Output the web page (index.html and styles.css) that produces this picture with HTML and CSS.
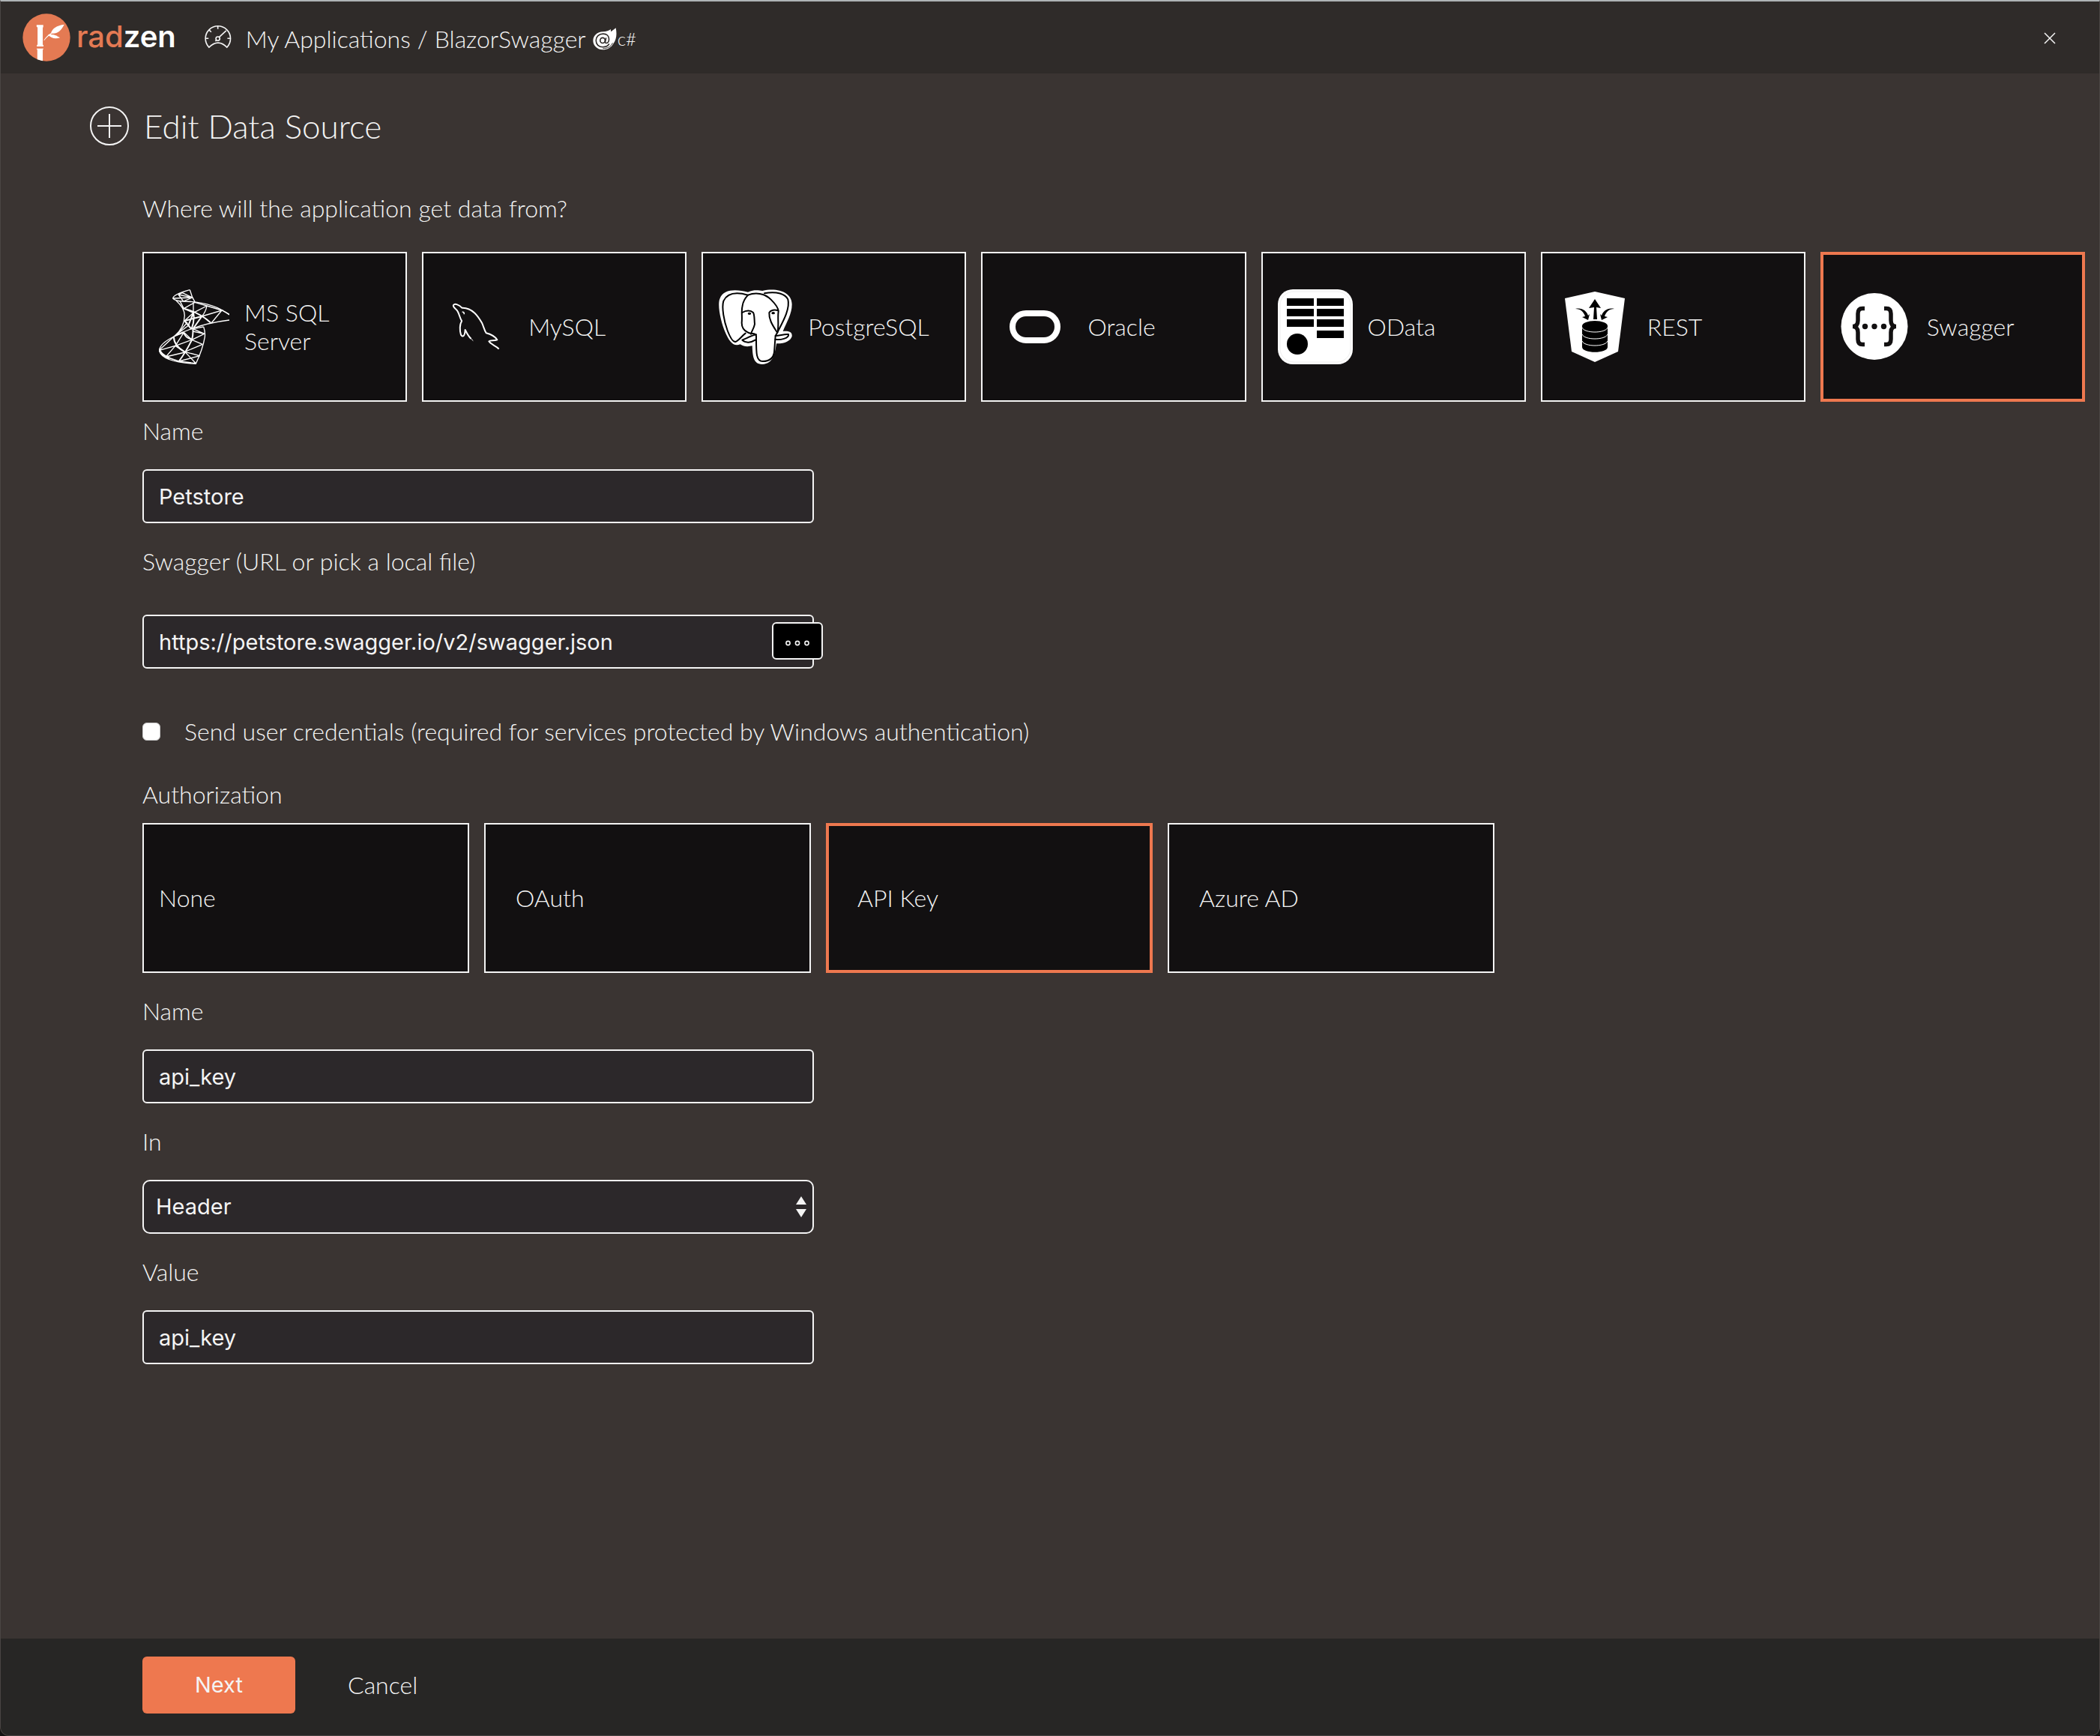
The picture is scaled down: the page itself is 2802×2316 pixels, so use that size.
FILE: index.html
```html
<!DOCTYPE html>
<html lang="en">
<head>
<meta charset="utf-8">
<title>Radzen - Edit Data Source</title>
<link rel="stylesheet" href="styles.css">
</head>
<body>
<div class="window">
  <header class="topbar">
    <a class="brand" href="#">
      <svg class="brand-mark" viewBox="60 54 194 192" aria-hidden="true">
        <defs><clipPath id="disc"><circle cx="157" cy="150" r="96"/></clipPath></defs>
        <circle cx="157" cy="150" r="96" fill="#e47a53"/>
        <g fill="#fff" clip-path="url(#disc)">
          <path d="M117 99h27v8l-2 4v68l3 3v4h-27v-4l3-4v-68l-4-4z"/>
          <path d="M117 195h28l-3 6v50h-22v-50z"/>
          <path d="M175 134c4-20 24-32 54-36-14 26-28 39-54 36z"/>
          <path d="M163 139c22-4 34 3 49 12-18 6-35 4-49-12z"/>
          <path d="M146 161c10-14 18-22 30-29l3 2c-12 8-20 15-31 28z"/>
        </g>
      </svg>
      <span class="brand-name">rad<b>zen</b></span>
    </a>
    <nav class="crumbs" aria-label="Breadcrumb">
      <svg class="gauge" viewBox="790 100 110 94" fill="none" stroke="#f4f4f4" stroke-width="5" aria-hidden="true">
        <path d="M808 190a51 51 0 1 1 73 0q-36-36-73 0z"/>
        <circle cx="844" cy="155" r="8"/>
        <path d="M850 148l28-26M844 104v12M809 120l8 8M794 154h12M883 154h12M838 160l-4 5"/>
      </svg>
      <a href="#">My Applications</a>
      <span>/</span>
      <a href="#">BlazorSwagger</a>
      <svg class="blazor" viewBox="102 50 96 92" aria-hidden="true">
        <path d="M142 66c14 0 26-4 32-10l1 10 20-15c5 25 3 46-10 64-9 16-25 25-43 25-22 0-40-16-40-37s18-37 40-37z" fill="#fff"/>
        <g fill="none" stroke="#2f2b29">
          <path d="M168 116c-5 8-14 13-26 13-17 0-28-11-28-27s12-27 29-27c15 0 24 9 24 22 0 11-6 16-11 16-4 0-5-3-4-7l3-15" stroke-width="5"/>
          <ellipse cx="141" cy="102" rx="10" ry="11" stroke-width="5"/>
          <path d="M182 112c-7 16-22 23-40 23" stroke-width="3"/>
        </g>
      </svg>
      <span class="lang">c#</span>
    </nav>
    <button class="close" type="button" aria-label="Close">
      <svg viewBox="0 0 16 16" stroke="#f4f4f4" stroke-width="1.500" aria-hidden="true"><path d="M1 1l14 14M15 1L1 15"/></svg>
    </button>
  </header>

  <main class="page">
    <div class="heading">
      <svg class="plus" viewBox="0 0 52 52" fill="none" stroke="#f4f4f4" stroke-width="2" aria-hidden="true">
        <circle cx="26" cy="26" r="25"/><path d="M26 10v32M10 26h32"/>
      </svg>
      <h1>Edit Data Source</h1>
    </div>

    <form class="form" id="source">
      <p class="label" id="kind">Where will the application get data from?</p>
      <div class="cards sources" role="group" aria-labelledby="kind">
        <button type="button" class="card">
          <svg class="logo logo-mssql" viewBox="96 198 282 300" fill="none" stroke="#fff" stroke-width="4" aria-hidden="true">
            <path d="M220 200q-66 18-68 34 8 10 36 12 120 0 190 54M220 200l10 30 10 18M174 219l56 12M174 219l20 27M190 212l-16 7M190 212l40 19-36 15M154 234l76-3"/>
            <path d="M378 321q-130 16-222 66-60 30-58 58 12 44 146 51 28-60 36-108 2-20-5-40"/>
            <path d="M165 243q34 30 34 60-2 50-40 82M180 245l16 30M196 275l44-25M196 275l38 17M234 250v42M240 250l48 14M234 292l54-28M234 292l-35 32M288 264q-4 24-20 42M268 306l80-24-42 51M288 264l60 18M348 282l30 16"/>
            <path d="M196 275q60 14 108 57M199 324l69-18M199 324l28 34M234 292l-20 50M268 306l-34 48M234 292q6 30-7 64" stroke-width="6"/>
            <path d="M156 387l62-47M166 382l44-52M158 385l34-16"/>
            <path d="M156 387q-2 34 44 62M196 370q4 22 36 30M232 356q2 24-4 44-24 50-52 86" stroke-width="6"/>
            <path d="M232 356l46 20-50 24-30-28M275 348l-43 8M228 400l43 18M232 366l46 10M156 387l40-16M196 370l-34 54M162 424l66-24M98 442l64-18-38 44M156 387l-54 50M124 468l76-18M200 448l71-30M200 448l60 16M200 448l44 46M176 486l84-22M124 468l52 18M162 424l38 26M176 486l68 8"/>
            <path d="M98 436q0 20 40 38" stroke-width="8"/>
          </svg>
          <span>MS SQL<br>Server</span>
        </button>
        <button type="button" class="card">
          <svg class="logo" viewBox="108 198 300 300" fill="none" stroke="#fff" stroke-width="6" stroke-linejoin="round" aria-hidden="true">
            <path d="M202 326c-10-14-11-36-22-46-8-9-15-12-12-19 6-8 23-1 34 11 42-2 66 36 80 60 7 16 10 30 17 41 16 4 34 12 44 27-12 5-28 1-33 6 8 14 28 16 40 31"/>
            <path d="M202 324c-10 14-9 40-4 56 8 12 16 4 17-20 8 16 14 28 24 36"/>
            <path d="M239 396l8 8" stroke-width="3"/>
            <path d="M203 289c6-1 8 2 8 9" stroke-width="5"/>
          </svg>
          <span>MySQL</span>
        </button>
        <button type="button" class="card">
          <svg class="logo" viewBox="84 198 300 300" aria-hidden="true">
            <path d="M204 209c30-12 44-5 58-5 60-14 118 6 118 54 0 40-22 72-36 108 22-2 38 2 36 20-5 18-30 30-62 29-6 34-10 82-57 83-38 0-38-38-40-74-16 4-34 4-48-6-30 12-46-18-58-44-20-44-34-112-24-138 14-42 70-38 113-27z" fill="#fff"/>
            <g fill="none" stroke="#000" stroke-width="6" stroke-linejoin="round" stroke-linecap="round">
              <path d="M204 221c-50-14-84-6-98 24-8 26 2 80 16 118 10 26 22 46 32 45 12-4 26-24 40-34"/>
              <path d="M204 221c30-12 66-8 92 18 18 18 29 34 30 46-4 30 2 50-3 84l-9 15-5 66c-4 26-20 36-46 36-28 0-26-38-26-102-4-14-20-4-34-14-16-8-24-20-24-38 3-28-3-50 3-68 2-16 10-30 22-43z"/>
              <path d="M270 214c50-10 84 4 94 24 10 40-24 96-41 130"/>
              <path d="M181 291c16-10 34-10 44 0 6 10 4 30 6 46-3 18-12 26-15 40"/>
              <path d="M325 283c-14-4-28-2-36 8-2 30 16 54 32 80"/>
              <path d="M237 379c-20 4-40 16-56 22 14 14 36 10 52 0"/>
              <path d="M314 384c18 0 34-8 52-6 4 16-34 24-53 20"/>
              <ellipse cx="210" cy="295" rx="4" ry="2"/><ellipse cx="305" cy="293" rx="4" ry="2"/>
            </g>
          </svg>
          <span>PostgreSQL</span>
        </button>
        <button type="button" class="card">
          <svg class="logo" viewBox="0 0 100 100" aria-hidden="true"><rect x="20" y="32" width="60" height="36" rx="18" fill="none" stroke="#fff" stroke-width="8"/></svg>
          <span>Oracle</span>
        </button>
        <button type="button" class="card">
          <svg class="logo" viewBox="0 0 100 100" aria-hidden="true">
            <rect width="100" height="100" rx="20" fill="#fff"/>
            <rect x="3" y="3" width="94" height="94" rx="18" fill="none" stroke="#eee"/>
            <path d="M12 12h36v10H12zM12 26h36v10H12zM12 40h36v10H12zM52 12h36v10H52zM52 26h36v10H52zM52 40h36v10H52zM52 55h36v10H52z"/>
            <circle cx="26" cy="73" r="14"/>
          </svg>
          <span>OData</span>
        </button>
        <button type="button" class="card">
          <svg class="logo" viewBox="0 0 100 100" aria-hidden="true">
            <path d="M50 3l40 9-9 71-31 14-31-14-9-71z" fill="#fff"/>
            <path d="M50 13l8 12-6-1 1 16h-5l1-16-7 1z"/>
            <path d="M24 26c9-2 15 3 17 9l2-2-2 8-8-4 4-1c-2-6-6-10-13-10zM76 26c-9-2-15 3-17 9l-2-2 2 8 8-4-4-1c2-6 6-10 13-10z"/>
            <path d="M33 49v28c0 9 34 9 34 0V49z"/><ellipse cx="50" cy="49" rx="17" ry="7"/>
            <path d="M33 51c3 8 31 8 34 0M33 60c3 8 31 8 34 0M33 69c3 8 31 8 34 0" fill="none" stroke="#fff" stroke-width="1"/>
          </svg>
          <span>REST</span>
        </button>
        <button type="button" class="card selected" aria-pressed="true">
          <svg class="logo" viewBox="0 0 100 100" aria-hidden="true">
            <circle cx="50" cy="49.500" r="44.500" fill="#fff"/>
            <path d="M37 25.500h-3q-6 0-6 7v9q0 8-7 8 7 0 7 8v9q0 7 6 7h3M63 25.500h3q6 0 6 7v9q0 8 7 8-7 0-7 8v9q0 7-6 7h-3" fill="none" stroke="#121011" stroke-width="5.500"/>
            <g fill="#121011"><circle cx="37.500" cy="49.500" r="3.700"/><circle cx="50" cy="49.500" r="3.700"/><circle cx="62.500" cy="49.500" r="3.700"/></g>
          </svg>
          <span>Swagger</span>
        </button>
      </div>

      <label class="label" for="name">Name</label>
      <input class="field" id="name" type="text" value="Petstore">

      <label class="label label-file" for="url">Swagger (URL or pick a local file)</label>
      <div class="file">
        <input class="field" id="url" type="text" value="https://petstore.swagger.io/v2/swagger.json">
        <button class="browse" type="button" aria-label="Browse">
          <svg viewBox="0 0 34 10" fill="none" stroke="#f4f4f4" stroke-width="1.600" aria-hidden="true"><circle cx="4.500" cy="5" r="2.600"/><circle cx="17" cy="5" r="2.600"/><circle cx="29.500" cy="5" r="2.600"/></svg>
        </button>
      </div>

      <label class="check"><input type="checkbox">Send user credentials (required for services protected by Windows authentication)</label>

      <p class="label" id="auth">Authorization</p>
      <div class="cards auths" role="group" aria-labelledby="auth">
        <button type="button" class="card">None</button>
        <button type="button" class="card inset">OAuth</button>
        <button type="button" class="card inset selected" aria-pressed="true">API Key</button>
        <button type="button" class="card inset">Azure AD</button>
      </div>

      <label class="label" for="key">Name</label>
      <input class="field" id="key" type="text" value="api_key">

      <label class="label" for="in">In</label>
      <div class="select">
        <select class="field" id="in"><option>Header</option><option>Query</option></select>
        <svg viewBox="0 0 14 28" fill="#f4f4f4" aria-hidden="true"><path d="M7 0l7 11H0zM7 28l7-11H0z"/></svg>
      </div>

      <label class="label" for="value">Value</label>
      <input class="field" id="value" type="text" value="api_key">
    </form>
  </main>

  <footer class="actions">
    <button class="next" type="submit" form="source">Next</button>
    <button class="cancel" type="button">Cancel</button>
  </footer>
</div>
</body>
</html>
```
FILE: styles.css
```css
* { box-sizing: border-box; }

body {
  margin: 0;
  background: #141313;
  color: #f4f4f4;
  font: 300 32px/38px Lato, "Open Sans", sans-serif;
}

h1, p { margin: 0; font-weight: 300; }
a { color: inherit; text-decoration: none; }
svg { display: block; flex: none; }
button, input, select { font: inherit; color: inherit; margin: 0; }

.window {
  display: flex;
  flex-direction: column;
  min-height: 100vh;
  border: 1px solid #4a4543;
  border-top: 2px solid #aeb3b5;
  border-radius: 0 0 12px 12px;
  background: #3a3432;
  overflow: hidden;
}

.topbar {
  display: flex;
  align-items: center;
  height: 96px;
  padding: 0 58px 0 29px;
  background: #2f2b29;
}

.brand { display: flex; align-items: center; gap: 8px; }
.brand-mark { width: 64px; height: 64px; }
.brand-name { padding-bottom: 3px; font: 500 40px/48px Inter, sans-serif; color: #e47a53; }
.brand-name b { font-weight: 600; color: #fff; }

.crumbs { display: flex; align-items: center; gap: 9px; margin-left: 38px; padding-top: 4px; }
.gauge { width: 36px; height: 32px; margin: 0 10px 6px 0; }
.blazor { width: 32px; height: 30px; }
.lang { margin-left: -8px; font-size: 24px; }

.close { margin-left: auto; padding: 2px 0 0; border: 0; background: none; }
.close svg { width: 16px; height: 16px; }

.page { flex: 1; padding: 44px 19px 64px 119px; }

.heading { display: flex; align-items: center; gap: 20px; margin-bottom: 65px; }
.heading h1 { font-size: 44px; line-height: 52px; }
.plus { width: 52px; height: 52px; }

.form { display: flex; flex-direction: column; padding-left: 70px; }

.label { margin: 32px 0; }
.form > .label:first-child { margin: 0 0 39px; }
.sources + .label { margin-top: 20px; }
.label-file { margin-bottom: 52px; }

.cards { display: grid; gap: 20px; }
.sources { grid-template-columns: repeat(7, 1fr); }
.auths { grid-template-columns: repeat(4, 436px); }
#auth { margin: 46px 0 19px; }

.card {
  display: flex;
  align-items: center;
  gap: 20px;
  height: 200px;
  padding: 0 20px;
  border: 2px solid #f4f4f4;
  background: #121011;
  text-align: left;
}
.card.inset { padding-left: 40px; }
.card.selected { border: 4px solid #ee784f; padding-left: 18px; }
.card.inset.selected { padding-left: 38px; }

.logo { width: 100px; height: 100px; }
.logo-mssql { width: 94px; }

.field {
  width: 896px;
  max-width: 100%;
  height: 72px;
  padding: 0 20px;
  border: 2px solid #f4f4f4;
  border-radius: 6px;
  background: #2c282a;
  font: 400 29px/38px Inter, sans-serif;
}

.file, .select { position: relative; width: 896px; max-width: 100%; }
.browse {
  position: absolute;
  top: 10px;
  right: -12px;
  display: flex;
  justify-content: center;
  align-items: center;
  width: 68px;
  height: 50px;
  padding: 6px 0 0;
  border: 2px solid #f4f4f4;
  border-radius: 6px;
  background: #000;
}
.browse svg { width: 34px; height: 10px; }

.select .field { display: block; appearance: none; padding: 0 16px; border-radius: 10px; }
.select svg { position: absolute; top: 22px; right: 10px; width: 14px; height: 28px; pointer-events: none; }

.check { display: flex; align-items: center; gap: 32px; margin-top: 65px; }
.check input { appearance: none; width: 24px; height: 24px; border: 1px solid #c8c8c8; border-radius: 6px; background: #fff; }

.actions {
  display: flex;
  gap: 50px;
  padding: 24px 20px 29px 189px;
  background: #272625;
}
.actions button { height: 76px; padding: 0 20px; border: 0; background: none; }
.actions .next {
  width: 204px;
  border-radius: 6px;
  background: #ee784f;
  font: 400 29px/38px Inter, sans-serif;
}
```
